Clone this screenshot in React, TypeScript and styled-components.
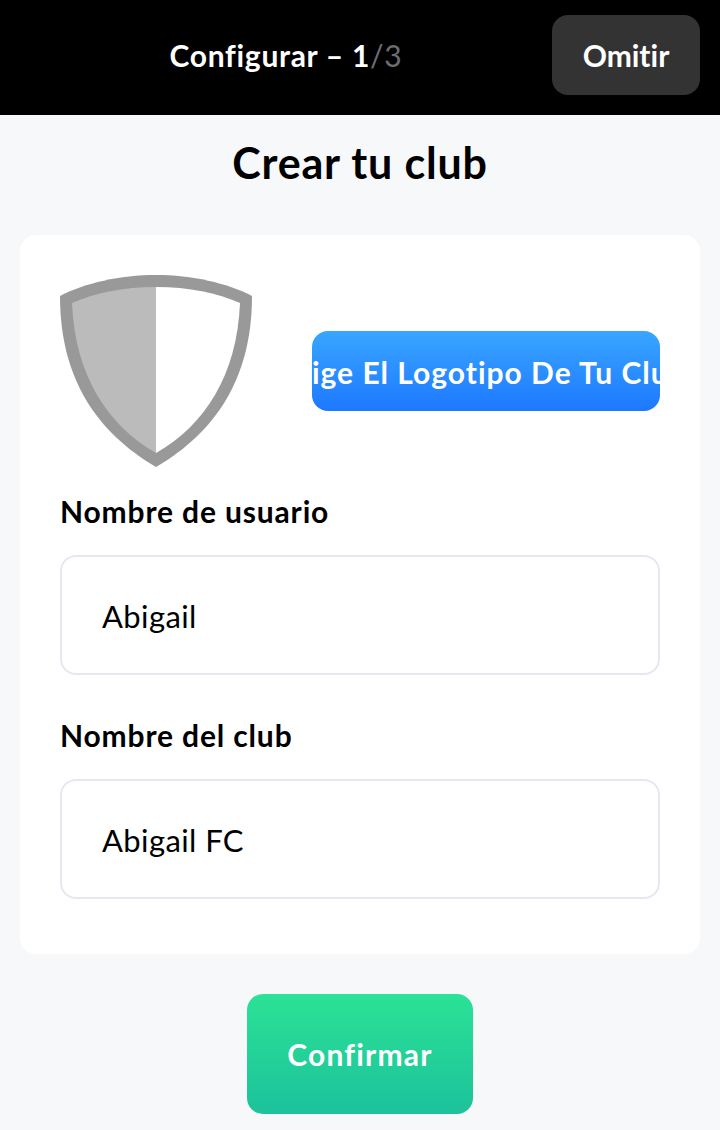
import { useState } from 'react';
import styled, { createGlobalStyle } from 'styled-components';

const GlobalStyle = createGlobalStyle`
  html, body {
    margin: 0;
    padding: 0;
    background: #f7f8fa;
  }
  * {
    box-sizing: border-box;
  }
`;

const App = () => {
  const [username, setUsername] = useState('Abigail');
  const [clubName, setClubName] = useState('Abigail FC');

  return (
    <Page>
      <GlobalStyle />
      <Header>
        <Progress>
          Configurar – 1<Muted>/3</Muted>
        </Progress>
        <SkipButton>Omitir</SkipButton>
      </Header>
      <Title>Crear tu club</Title>
      <Card>
        <LogoRow>
          <svg width="192" height="192" viewBox="0 0 192 192">
            <path d="M96 0C60 0 25 8 0 21C0 105 38 158 96 192C154 158 192 105 192 21C167 8 132 0 96 0Z" fill="#999999" />
            <path d="M96 12C63 12 35 18 12 28C15 100 47 150 96 178Z" fill="#bbbbbb" />
            <path d="M96 12C129 12 157 18 180 28C177 100 145 150 96 178Z" fill="#ffffff" />
          </svg>
          <LogoButton>
            <span>Elige El Logotipo De Tu Club</span>
          </LogoButton>
        </LogoRow>
        <Field>
          <Label htmlFor="username">Nombre de usuario</Label>
          <Input id="username" value={username} onChange={(e) => setUsername(e.target.value)} />
        </Field>
        <Field>
          <Label htmlFor="club">Nombre del club</Label>
          <Input id="club" value={clubName} onChange={(e) => setClubName(e.target.value)} />
        </Field>
      </Card>
      <Footer>
        <ConfirmButton>Confirmar</ConfirmButton>
      </Footer>
    </Page>
  );
};

export default App;

const Page = styled.div`
  width: 720px;
  height: 1130px;
  overflow: hidden;
  background: #f7f8fa;
  font-family: 'Lato', 'Liberation Sans', sans-serif;
  font-variant-ligatures: none;
  color: #000;
`;

const Header = styled.header`
  height: 115px;
  background: #000;
  display: flex;
  align-items: flex-start;
  padding: 15px 20px 0;
`;

const Progress = styled.div`
  flex: 1;
  height: 80px;
  display: flex;
  align-items: center;
  justify-content: center;
  color: #fff;
  font-size: 30px;
  font-weight: 700;
  letter-spacing: 0.7px;
  white-space: pre;
`;

const Muted = styled.span`
  color: #6a6e73;
  font-weight: 400;
`;

const SkipButton = styled.button`
  width: 148px;
  height: 80px;
  border: none;
  border-radius: 16px;
  background: #333;
  color: #fff;
  font-family: inherit;
  font-size: 30px;
  font-weight: 700;
  font-variant-ligatures: none;
`;

const Title = styled.h1`
  margin: 0;
  padding-top: 20px;
  height: 120px;
  text-align: center;
  font-size: 43px;
  line-height: 56px;
  font-weight: 700;
  letter-spacing: 0.8px;
`;

const Card = styled.section`
  margin: 0 20px;
  height: 719px;
  padding: 40px 40px 0;
  background: #fff;
  border-radius: 16px;
`;

const LogoRow = styled.div`
  display: flex;
  align-items: center;
  justify-content: space-between;
  height: 192px;
  margin-bottom: 26px;
`;

const LogoButton = styled.button`
  width: 348px;
  height: 80px;
  padding: 2px 0 0;
  border: none;
  border-radius: 16px;
  overflow: hidden;
  display: flex;
  align-items: center;
  justify-content: center;
  background: linear-gradient(180deg, #38a6ff 0%, #1e78ff 100%);
  color: #fff;
  font-family: inherit;
  font-size: 30px;
  font-weight: 700;
  letter-spacing: 1px;
  white-space: nowrap;

  span {
    flex-shrink: 0;
  }
`;

const Field = styled.div`
  display: flex;
  flex-direction: column;
  gap: 26px;

  & + & {
    margin-top: 42px;
  }
`;

const Label = styled.label`
  font-size: 30px;
  line-height: 36px;
  font-weight: 700;
  letter-spacing: 0.85px;
`;

const Input = styled.input`
  width: 100%;
  height: 120px;
  padding: 1px 40px 0;
  border: 2px solid #e8e6f3;
  border-radius: 16px;
  background: #fff;
  color: #000;
  font-family: inherit;
  font-size: 31px;
  letter-spacing: 0.4px;
  outline: none;
`;

const Footer = styled.div`
  display: flex;
  justify-content: center;
  padding-top: 40px;
`;

const ConfirmButton = styled.button`
  width: 226px;
  height: 120px;
  border: none;
  border-radius: 16px;
  background: linear-gradient(180deg, #2be295 0%, #1cc29c 100%);
  color: #fff;
  font-family: inherit;
  font-size: 30px;
  font-weight: 700;
  letter-spacing: 1.2px;
`;
